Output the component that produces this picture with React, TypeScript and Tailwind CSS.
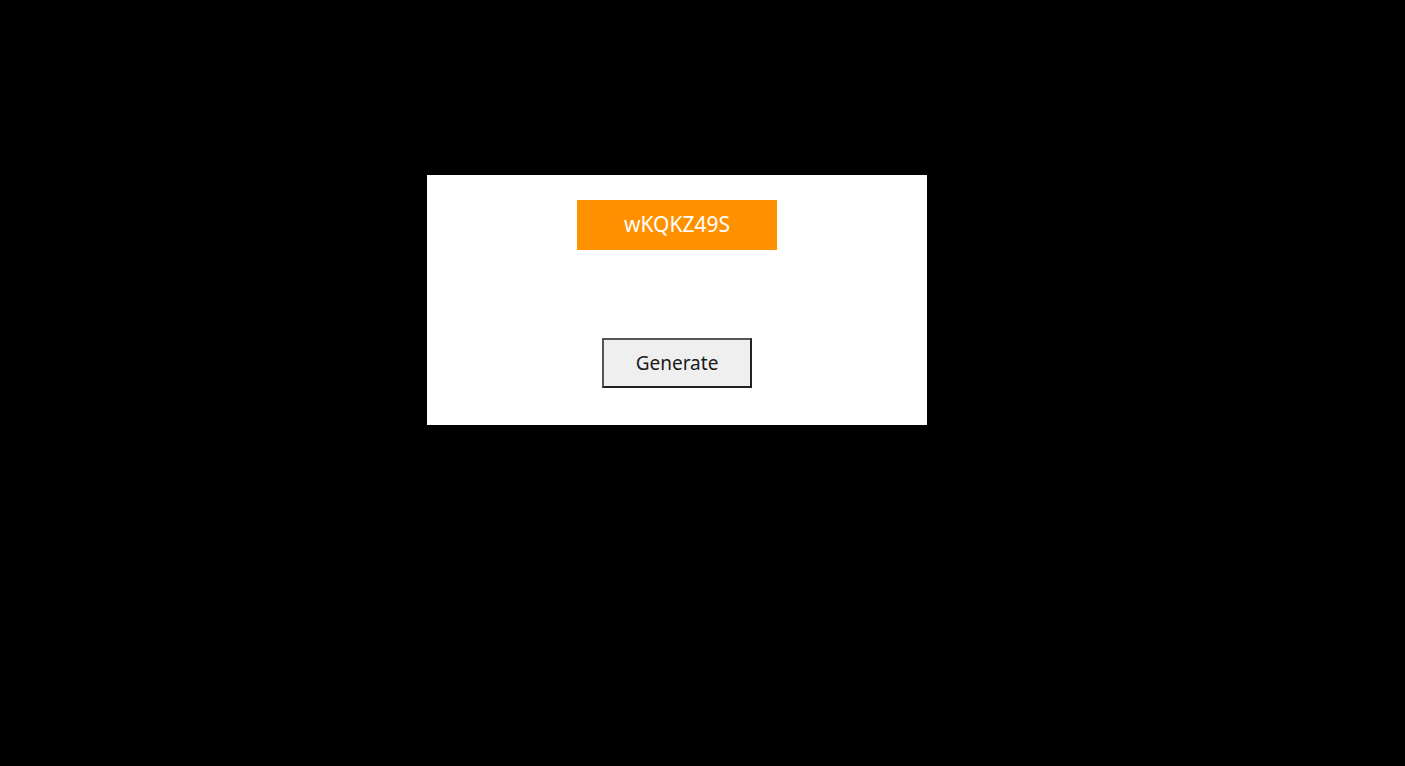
export default function App() {
  return (
    <div className="min-h-screen w-full bg-black pl-[427px] pt-[175px]" style={{ fontFamily: '"Noto Sans", "Open Sans", sans-serif' }}>
      <div className="flex h-[250px] w-[500px] flex-col items-center bg-white pt-[25px]">
        <div className="flex h-[50px] w-[200px] items-center justify-center bg-[#ff9100] text-[21px] text-white">
          wKQKZ49S
        </div>
        <button className="mt-[88px] flex h-[50px] w-[150px] items-center justify-center border-2 border-t-[#555555] border-l-[#555555] border-r-[#222222] border-b-[#222222] bg-[#efefef] text-[19px] text-[#1a1a1a]">
          Generate
        </button>
      </div>
    </div>
  );
}
